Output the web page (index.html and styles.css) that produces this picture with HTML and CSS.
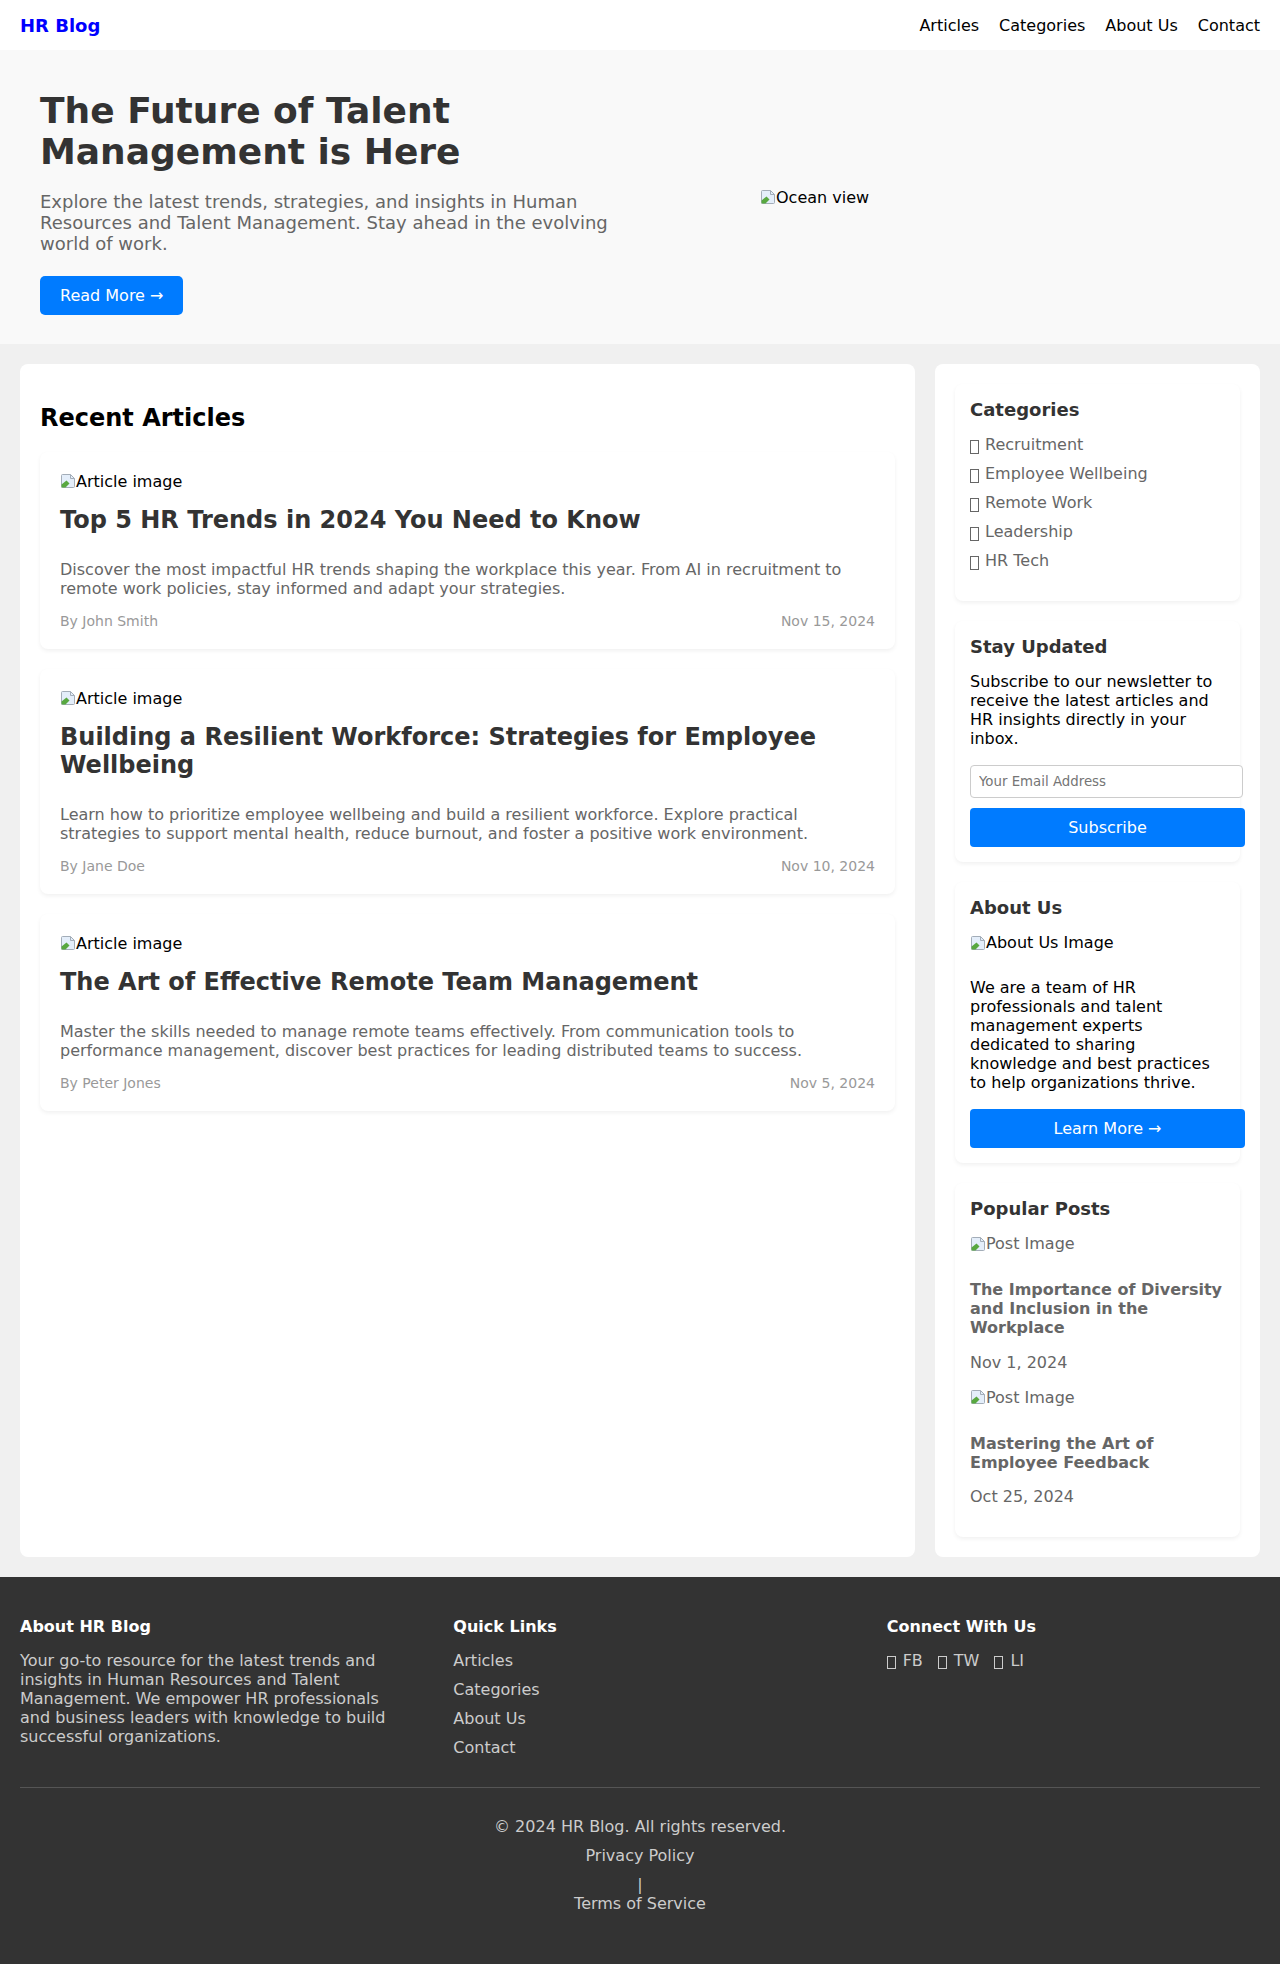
FILE: index.html
```html
<!DOCTYPE html>
<html lang="en">
<head>
<meta charset="utf-8">
<title>HR Blog</title>
<link rel="stylesheet" href="styles.css">
</head>
<body>
<nav class="navbar">
  <a class="logo" href="#">HR Blog</a>
  <ul class="nav-links">
    <li><a href="#">Articles</a></li>
    <li><a href="#">Categories</a></li>
    <li><a href="#">About Us</a></li>
    <li><a href="#">Contact</a></li>
  </ul>
</nav>

<section class="hero">
  <div class="hero-text">
    <h1>The Future of Talent Management is Here</h1>
    <p>Explore the latest trends, strategies, and insights in Human Resources and Talent Management. Stay ahead in the evolving world of work.</p>
    <a class="btn" href="#">Read More →</a>
  </div>
  <div class="hero-image">
    <span class="img-alt"><svg class="broken" width="16" height="16" viewBox="0 0 16 16"><path d="M1.5 2.5q0-1 1-1h8l4 4v8q0 1-1 1h-11q-1 0-1-1z" fill="#e4eefa" stroke="#a3adb8"/><path d="M10.5 1.5v4h4" fill="none" stroke="#a3adb8"/><path d="M1.5 14.5v-3l5-4 3 3-4 4z" fill="#58a840"/></svg>Ocean view</span>
  </div>
</section>

<div class="container">
  <main class="content">
    <h2>Recent Articles</h2>

    <article class="card">
      <div class="img-alt"><svg class="broken" width="16" height="16" viewBox="0 0 16 16"><path d="M1.5 2.5q0-1 1-1h8l4 4v8q0 1-1 1h-11q-1 0-1-1z" fill="#e4eefa" stroke="#a3adb8"/><path d="M10.5 1.5v4h4" fill="none" stroke="#a3adb8"/><path d="M1.5 14.5v-3l5-4 3 3-4 4z" fill="#58a840"/></svg>Article image</div>
      <h3>Top 5 HR Trends in 2024 You Need to Know</h3>
      <p class="desc">Discover the most impactful HR trends shaping the workplace this year. From AI in recruitment to remote work policies, stay informed and adapt your strategies.</p>
      <div class="meta"><span>By John Smith</span><span>Nov 15, 2024</span></div>
    </article>

    <article class="card">
      <div class="img-alt"><svg class="broken" width="16" height="16" viewBox="0 0 16 16"><path d="M1.5 2.5q0-1 1-1h8l4 4v8q0 1-1 1h-11q-1 0-1-1z" fill="#e4eefa" stroke="#a3adb8"/><path d="M10.5 1.5v4h4" fill="none" stroke="#a3adb8"/><path d="M1.5 14.5v-3l5-4 3 3-4 4z" fill="#58a840"/></svg>Article image</div>
      <h3>Building a Resilient Workforce: Strategies for Employee Wellbeing</h3>
      <p class="desc">Learn how to prioritize employee wellbeing and build a resilient workforce. Explore practical strategies to support mental health, reduce burnout, and foster a positive work environment.</p>
      <div class="meta"><span>By Jane Doe</span><span>Nov 10, 2024</span></div>
    </article>

    <article class="card">
      <div class="img-alt"><svg class="broken" width="16" height="16" viewBox="0 0 16 16"><path d="M1.5 2.5q0-1 1-1h8l4 4v8q0 1-1 1h-11q-1 0-1-1z" fill="#e4eefa" stroke="#a3adb8"/><path d="M10.5 1.5v4h4" fill="none" stroke="#a3adb8"/><path d="M1.5 14.5v-3l5-4 3 3-4 4z" fill="#58a840"/></svg>Article image</div>
      <h3>The Art of Effective Remote Team Management</h3>
      <p class="desc">Master the skills needed to manage remote teams effectively. From communication tools to performance management, discover best practices for leading distributed teams to success.</p>
      <div class="meta"><span>By Peter Jones</span><span>Nov 5, 2024</span></div>
    </article>
  </main>

  <aside class="sidebar">
    <div class="widget">
      <h3>Categories</h3>
      <ul class="cat-list">
        <li><span class="tofu"></span>Recruitment</li>
        <li><span class="tofu"></span>Employee Wellbeing</li>
        <li><span class="tofu"></span>Remote Work</li>
        <li><span class="tofu"></span>Leadership</li>
        <li><span class="tofu"></span>HR Tech</li>
      </ul>
    </div>

    <div class="widget">
      <h3>Stay Updated</h3>
      <p class="widget-text news-text">Subscribe to our newsletter to receive the latest articles and HR insights directly in your inbox.</p>
      <input class="email" type="email" placeholder="Your Email Address">
      <button class="btn-full" type="button">Subscribe</button>
    </div>

    <div class="widget">
      <h3>About Us</h3>
      <div class="img-alt about-img"><svg class="broken" width="16" height="16" viewBox="0 0 16 16"><path d="M1.5 2.5q0-1 1-1h8l4 4v8q0 1-1 1h-11q-1 0-1-1z" fill="#e4eefa" stroke="#a3adb8"/><path d="M10.5 1.5v4h4" fill="none" stroke="#a3adb8"/><path d="M1.5 14.5v-3l5-4 3 3-4 4z" fill="#58a840"/></svg>About Us Image</div>
      <p class="widget-text about-text">We are a team of HR professionals and talent management experts dedicated to sharing knowledge and best practices to help organizations thrive.</p>
      <button class="btn-full" type="button">Learn More →</button>
    </div>

    <div class="widget">
      <h3>Popular Posts</h3>
      <a class="post" href="#">
        <div class="img-alt post-img"><svg class="broken" width="16" height="16" viewBox="0 0 16 16"><path d="M1.5 2.5q0-1 1-1h8l4 4v8q0 1-1 1h-11q-1 0-1-1z" fill="#e4eefa" stroke="#a3adb8"/><path d="M10.5 1.5v4h4" fill="none" stroke="#a3adb8"/><path d="M1.5 14.5v-3l5-4 3 3-4 4z" fill="#58a840"/></svg>Post Image</div>
        <h4>The Importance of Diversity and Inclusion in the Workplace</h4>
        <p class="post-date">Nov 1, 2024</p>
      </a>
      <a class="post" href="#">
        <div class="img-alt post-img"><svg class="broken" width="16" height="16" viewBox="0 0 16 16"><path d="M1.5 2.5q0-1 1-1h8l4 4v8q0 1-1 1h-11q-1 0-1-1z" fill="#e4eefa" stroke="#a3adb8"/><path d="M10.5 1.5v4h4" fill="none" stroke="#a3adb8"/><path d="M1.5 14.5v-3l5-4 3 3-4 4z" fill="#58a840"/></svg>Post Image</div>
        <h4>Mastering the Art of Employee Feedback</h4>
        <p class="post-date">Oct 25, 2024</p>
      </a>
    </div>
  </aside>
</div>

<footer class="footer">
  <div class="footer-grid">
    <div class="footer-col">
      <h4>About HR Blog</h4>
      <p>Your go-to resource for the latest trends and insights in Human Resources and Talent Management. We empower HR professionals and business leaders with knowledge to build successful organizations.</p>
    </div>
    <div class="footer-col">
      <h4>Quick Links</h4>
      <ul class="footer-links">
        <li><a href="#">Articles</a></li>
        <li><a href="#">Categories</a></li>
        <li><a href="#">About Us</a></li>
        <li><a href="#">Contact</a></li>
      </ul>
    </div>
    <div class="footer-col">
      <h4>Connect With Us</h4>
      <div class="social">
        <a href="#"><span class="tofu"></span>FB</a>
        <a href="#"><span class="tofu"></span>TW</a>
        <a href="#"><span class="tofu"></span>LI</a>
      </div>
    </div>
  </div>
  <div class="footer-bottom">
    <p class="copy">© 2024 HR Blog. All rights reserved.</p>
    <div class="legal"><a href="#">Privacy Policy</a> | <a href="#">Terms of Service</a></div>
  </div>
</footer>
</body>
</html>
```

FILE: styles.css
```css
* { box-sizing: content-box; }

html { background: #333; }

body {
  margin: 0;
  font-family: "DejaVu Sans", sans-serif;
  font-size: 16px;
  color: #000;
  background: #333;
}

a { text-decoration: none; }

/* Navbar */
.navbar {
  display: flex;
  justify-content: space-between;
  align-items: center;
  height: 50px;
  padding: 0 20px;
  background: #fff;
}
.logo {
  color: #0000ff;
  font-weight: bold;
  font-size: 18px;
}
.nav-links {
  display: flex;
  gap: 20px;
  list-style: none;
  margin: 0;
  padding: 0;
}
.nav-links a { color: #000; }

/* Hero */
.hero {
  display: flex;
  align-items: center;
  padding: 29px 40px;
  background: #f9f9f9;
}
.hero-text {
  flex: 0 0 600px;
  display: flex;
  flex-direction: column;
  align-items: flex-start;
}
.hero-text h1 {
  margin: 11px 0 19px;
  font-size: 36px;
  color: #333;
}
.hero-text p {
  margin: 0 0 21.5px;
  font-size: 18px;
  color: #666;
}
.btn {
  display: inline-block;
  padding: 10px 20px;
  background: #007bff;
  color: #fff;
  border-radius: 5px;
}
.hero-image {
  flex: 1;
  padding-left: 120px;
  padding-top: 1px;
}

.img-alt {
  display: flex;
  align-items: center;
  height: 19px;
  color: #000;
}
.broken { flex: 0 0 16px; }

/* Layout */
.container {
  display: grid;
  grid-template-columns: 1fr 325px;
  gap: 20px;
  padding: 20px;
  background: #f0f0f0;
}
.content {
  background: #fff;
  border-radius: 8px;
  padding: 20px;
}
.content h2 {
  margin: 20px 0 20px;
  font-size: 24px;
  color: #000;
}
.card {
  background: #fff;
  border-radius: 8px;
  padding: 20px;
  margin-bottom: 20px;
  box-shadow: 0 2px 4px rgba(0, 0, 0, 0.06);
}
.card .img-alt { margin-bottom: 15px; }
.card h3 {
  margin: 0 0 26px;
  font-size: 24px;
  color: #333;
}
.desc {
  margin: 0 0 15px;
  color: #666;
}
.meta {
  display: flex;
  justify-content: space-between;
  font-size: 14px;
  color: #999;
}

/* Sidebar */
.sidebar {
  background: #fff;
  border-radius: 8px;
  padding: 20px;
}
.widget {
  background: #fff;
  border-radius: 8px;
  padding: 15px;
  margin-bottom: 20px;
  box-shadow: 0 2px 4px rgba(0, 0, 0, 0.06);
}
.widget:last-child { margin-bottom: 0; }
.widget h3 {
  margin: 0 0 15px;
  font-size: 18px;
  color: #333;
}
.cat-list {
  display: flex;
  flex-direction: column;
  gap: 10px;
  list-style: none;
  margin: 0 0 16px;
  padding: 0;
  color: #666;
}
.tofu {
  display: inline-block;
  width: 7px;
  height: 12px;
  border: 1px solid currentColor;
  margin-right: 6px;
  vertical-align: -4px;
}
.widget-text { margin: 0; color: #000; }
.news-text { margin-bottom: 17px; }
.email {
  display: block;
  width: 100%;
  padding: 8px;
  border: 1px solid #ccc;
  border-radius: 4px;
  font-family: "DejaVu Sans", sans-serif;
  font-size: 13.33px;
  margin: 0 0 10.5px;
}
.email::placeholder { color: #757575; }
.btn-full {
  display: block;
  width: 100%;
  padding: 10px;
  border: none;
  border-radius: 4px;
  background: #007bff;
  color: #fff;
  font-family: "DejaVu Sans", sans-serif;
  font-size: 16px;
  line-height: normal;
}
.about-img { margin-bottom: 26px; }
.about-text { margin-bottom: 17px; }

.post {
  display: block;
  color: #666;
}
.post .img-alt { color: #666; }
.post-img { margin-bottom: 27px; }
.post h4 {
  margin: 0 0 15.5px;
  font-size: 16px;
}
.post-date { margin: 0 0 16px; }

/* Footer */
.footer {
  background: #333;
  color: #ccc;
  padding: 40px 20px;
}
.footer-grid {
  display: grid;
  grid-template-columns: repeat(3, 1fr);
  gap: 60px;
}
.footer-col h4 {
  margin: 0 0 15px;
  font-size: 16px;
  color: #fff;
}
.footer-col p { margin: 0; }
.footer-links {
  list-style: none;
  margin: 0;
  padding: 0;
}
.footer-links li { margin-bottom: 10px; }
.footer-links a { color: #ccc; }
.social {
  display: flex;
  gap: 15px;
}
.social a { color: #ccc; }
.social .tofu {
  width: 7px;
  height: 11px;
  margin-right: 7px;
  vertical-align: -3px;
}
.footer-bottom {
  margin-top: 20px;
  border-top: 1px solid #555;
  padding-top: 29px;
  text-align: center;
}
.copy { margin: 0 0 10px; }
.legal a {
  display: block;
  color: #ccc;
  margin-bottom: 10px;
}
```
